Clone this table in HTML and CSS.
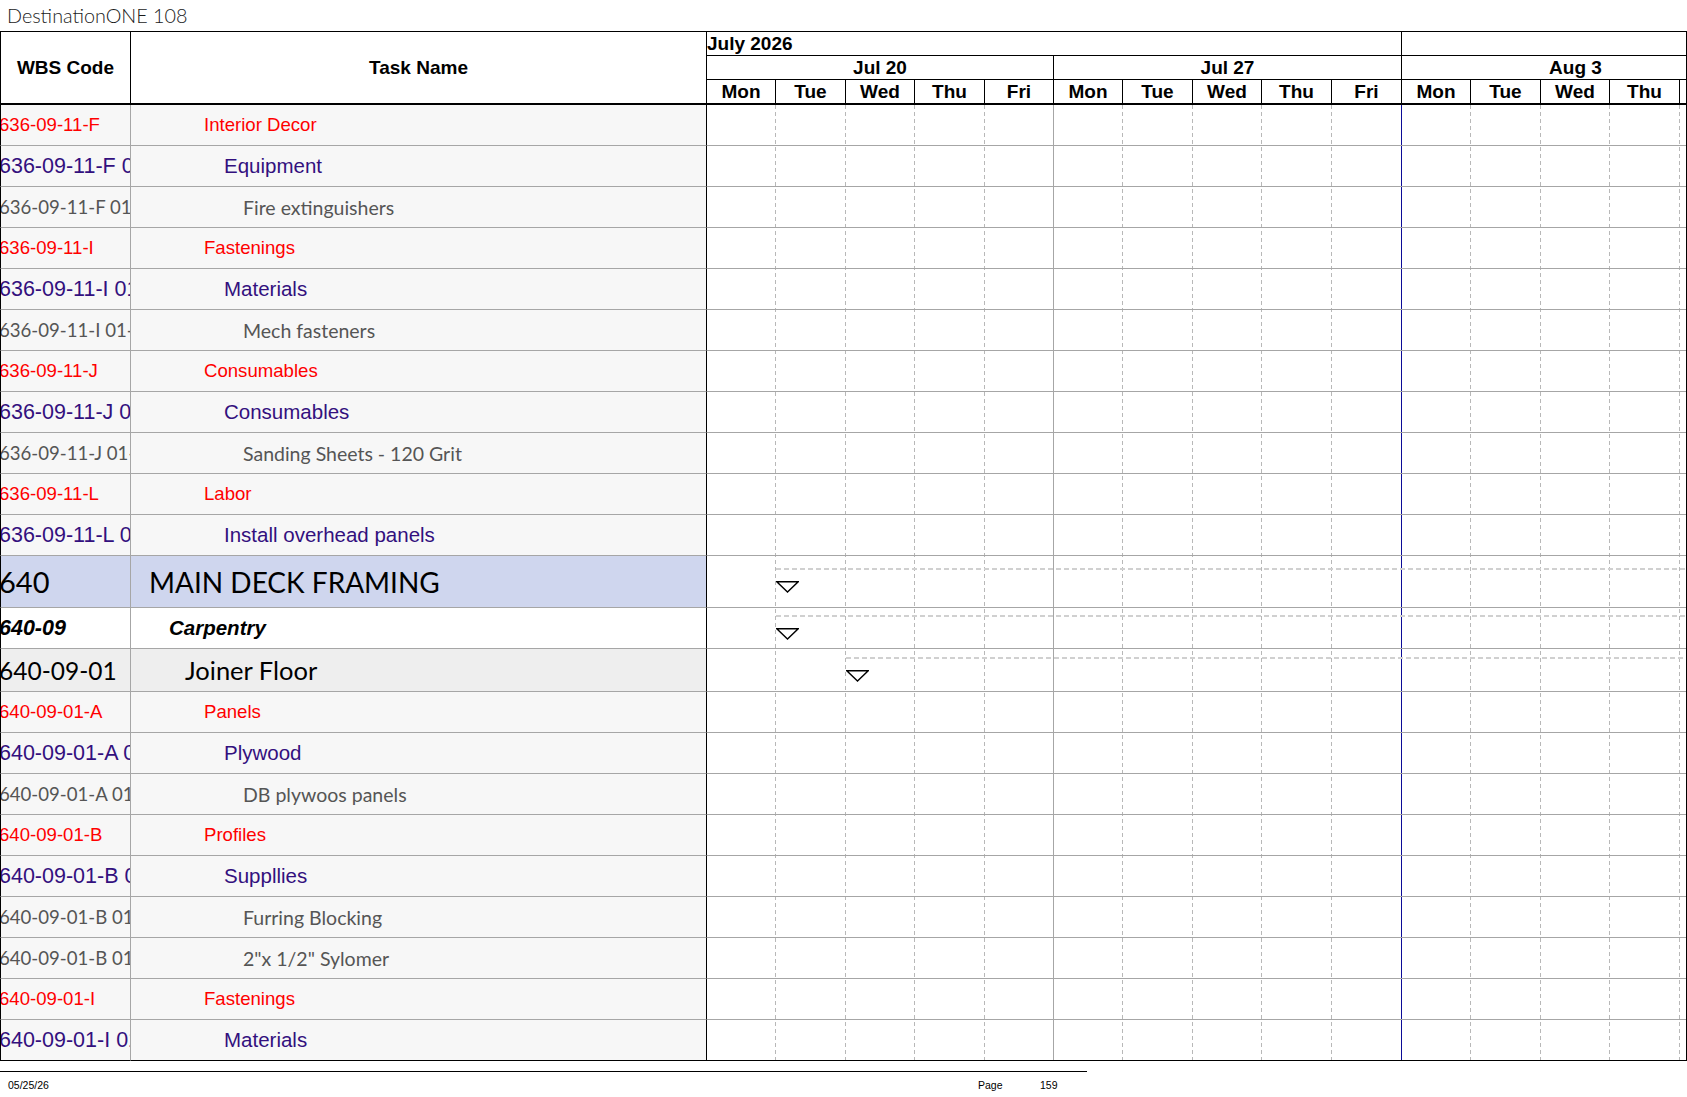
FILE: index.html
```html
<!DOCTYPE html>
<html>
<head>
<meta charset="utf-8">
<title>DestinationONE 108</title>
<link rel="stylesheet" href="styles.css">
</head>
<body>
<div class="title">DestinationONE 108</div>

<div class="head">
  <div class="hc wbs">WBS Code</div>
  <div class="hc task">Task Name</div>
  <div class="h-chart">
    <div class="month">July 2026</div>
    <div class="month-rest"></div>
    <div class="week w1">Jul 20</div>
    <div class="week w2">Jul 27</div>
    <div class="week w3"><span>Aug 3</span></div>
    <div class="day">Mon</div>
    <div class="day">Tue</div>
    <div class="day">Wed</div>
    <div class="day">Thu</div>
    <div class="day">Fri</div>
    <div class="day">Mon</div>
    <div class="day">Tue</div>
    <div class="day">Wed</div>
    <div class="day">Thu</div>
    <div class="day">Fri</div>
    <div class="day">Mon</div>
    <div class="day">Tue</div>
    <div class="day">Wed</div>
    <div class="day">Thu</div>
    <div class="day blank"></div>
  </div>
</div>

<div class="body">
  <div class="left">
    <div class="row red"><div class="w"><span>636-09-11-F</span></div><div class="t">Interior Decor</div></div>
    <div class="row pur"><div class="w"><span>636-09-11-F 01</span></div><div class="t">Equipment</div></div>
    <div class="row gry"><div class="w"><span>636-09-11-F 01-01</span></div><div class="t">Fire extinguishers</div></div>
    <div class="row red"><div class="w"><span>636-09-11-I</span></div><div class="t">Fastenings</div></div>
    <div class="row pur"><div class="w"><span>636-09-11-I 01</span></div><div class="t">Materials</div></div>
    <div class="row gry"><div class="w"><span>636-09-11-I 01-01</span></div><div class="t">Mech fasteners</div></div>
    <div class="row red"><div class="w"><span>636-09-11-J</span></div><div class="t">Consumables</div></div>
    <div class="row pur"><div class="w"><span>636-09-11-J 01</span></div><div class="t">Consumables</div></div>
    <div class="row gry"><div class="w"><span>636-09-11-J 01-01</span></div><div class="t">Sanding Sheets - 120 Grit</div></div>
    <div class="row red"><div class="w"><span>636-09-11-L</span></div><div class="t">Labor</div></div>
    <div class="row pur"><div class="w"><span>636-09-11-L 01</span></div><div class="t">Install overhead panels</div></div>
    <div class="row main"><div class="w"><span>640</span></div><div class="t">MAIN DECK FRAMING</div></div>
    <div class="row carp"><div class="w"><span>640-09</span></div><div class="t">Carpentry</div></div>
    <div class="row joiner"><div class="w"><span>640-09-01</span></div><div class="t">Joiner Floor</div></div>
    <div class="row red"><div class="w"><span>640-09-01-A</span></div><div class="t">Panels</div></div>
    <div class="row pur"><div class="w"><span>640-09-01-A 01</span></div><div class="t">Plywood</div></div>
    <div class="row gry"><div class="w"><span>640-09-01-A 01-01</span></div><div class="t">DB plywoos panels</div></div>
    <div class="row red"><div class="w"><span>640-09-01-B</span></div><div class="t">Profiles</div></div>
    <div class="row pur"><div class="w"><span>640-09-01-B 01</span></div><div class="t">Suppllies</div></div>
    <div class="row gry"><div class="w"><span>640-09-01-B 01-01</span></div><div class="t">Furring Blocking</div></div>
    <div class="row gry"><div class="w"><span>640-09-01-B 01-02</span></div><div class="t">2"x 1/2" Sylomer</div></div>
    <div class="row red"><div class="w"><span>640-09-01-I</span></div><div class="t">Fastenings</div></div>
    <div class="row pur"><div class="w"><span>640-09-01-I 01</span></div><div class="t">Materials</div></div>
  </div>

  <div class="chart">
    <div class="lines">
      <i></i><i></i><i></i><i></i><i class="wk"></i>
      <i></i><i></i><i></i><i></i><i class="now"></i>
      <i></i><i></i><i></i><i></i><i class="end"></i>
    </div>
    <div class="crows">
      <div class="cr"></div>
      <div class="cr"></div>
      <div class="cr"></div>
      <div class="cr"></div>
      <div class="cr"></div>
      <div class="cr"></div>
      <div class="cr"></div>
      <div class="cr"></div>
      <div class="cr"></div>
      <div class="cr"></div>
      <div class="cr"></div>
      <div class="cr main">
        <div class="bar start-tue">
          <div class="dash"></div>
          <svg class="tri" viewBox="0 0 23 12" width="23" height="12"><polygon points="0.8,0.8 22.2,0.8 11.5,11" fill="#fff" stroke="#000" stroke-width="1.4"/></svg>
        </div>
      </div>
      <div class="cr carp">
        <div class="bar start-tue">
          <div class="dash"></div>
          <svg class="tri" viewBox="0 0 23 12" width="23" height="12"><polygon points="0.8,0.8 22.2,0.8 11.5,11" fill="#fff" stroke="#000" stroke-width="1.4"/></svg>
        </div>
      </div>
      <div class="cr joiner">
        <div class="bar start-wed">
          <div class="dash"></div>
          <svg class="tri" viewBox="0 0 23 12" width="23" height="12"><polygon points="0.8,0.8 22.2,0.8 11.5,11" fill="#fff" stroke="#000" stroke-width="1.4"/></svg>
        </div>
      </div>
      <div class="cr"></div>
      <div class="cr"></div>
      <div class="cr"></div>
      <div class="cr"></div>
      <div class="cr"></div>
      <div class="cr"></div>
      <div class="cr"></div>
      <div class="cr"></div>
      <div class="cr"></div>
    </div>
  </div>
</div>

<div class="foot">
  <span>05/25/26</span>
  <span>Page</span>
  <span>159</span>
</div>
</body>
</html>
```

FILE: styles.css
```css
:root {
  --cols: 69px 70px 69px 70px 69px 69px 70px 69px 70px 70px 69px 70px 69px 70px 1fr;
  --rowline: #a6a6a6;
}

* { box-sizing: border-box; }

body {
  margin: 0;
  width: 1687px;
  background: #fff;
  font-family: "Liberation Sans", Arial, sans-serif;
  color: #000;
}

.title {
  height: 31px;
  line-height: 31px;
  padding-left: 7px;
  font-family: Lato, "Liberation Sans", sans-serif;
  font-weight: 300;
  font-size: 19.8px;
  color: #1a1a1a;
}

/* ---------- header ---------- */
.head {
  display: grid;
  grid-template-columns: 131px 576px 980px;
  height: 74px;
  border-top: 1px solid #000;
}

.hc {
  display: flex;
  align-items: center;
  justify-content: center;
  border-right: 1px solid #000;
  border-bottom: 2px solid #000;
  font-weight: bold;
  font-size: 19px;
}

.hc.wbs { border-left: 1px solid #000; }

.h-chart {
  display: grid;
  grid-template-columns: var(--cols);
  grid-template-rows: 24px 24px 25px;
  border-right: 1px solid #000;
  font-weight: bold;
  font-size: 19px;
  line-height: 23px;
}

.month {
  grid-column: 1 / 11;
  border-right: 1px solid #000;
  border-bottom: 1px solid #000;
  white-space: nowrap;
}

.month-rest {
  grid-column: 11 / 16;
  border-bottom: 1px solid #000;
}

.week {
  border-bottom: 1px solid #000;
  border-right: 1px solid #000;
  text-align: center;
  white-space: nowrap;
}

.w1 { grid-column: 1 / 6; }
.w2 { grid-column: 6 / 11; }
.w3 {
  grid-column: 11 / 16;
  border-right: none;
  overflow: hidden;
}
.w3 span {
  display: block;
  width: 347px;
  text-align: center;
}

.day {
  border-right: 1px solid #000;
  border-bottom: 2px solid #000;
  text-align: center;
  overflow: hidden;
}

.day.blank { border-right: none; }

/* ---------- body ---------- */
.body {
  display: grid;
  grid-template-columns: 707px 980px;
}

.row {
  display: grid;
  grid-template-columns: 131px 576px;
  height: 41px;
}

.row > div {
  display: flex;
  align-items: center;
  white-space: nowrap;
  overflow: hidden;
  background: #f7f7f7;
  border-bottom: 1px solid var(--rowline);
}

.row .w {
  border-left: 1px solid #000;
  border-right: 1px solid var(--rowline);
}

.row .w span { margin-left: -2px; }

.row .t { border-right: 1px solid #000; }

.row:last-child > div { border-bottom-color: #000; }

.row.red { color: #f00; font-size: 18.6px; }
.row.red .t { padding-left: 73px; }

.row.pur { color: #33107e; font-size: 20.5px; }
.row.pur .w { font-size: 21.5px; }
.row.pur .t { padding-left: 93px; }

.row.gry {
  color: #555;
  font-family: Lato, "Liberation Sans", sans-serif;
  font-size: 19.5px;
}
.row.gry .w { font-size: 18.6px; }
.row.gry .t { padding-left: 112px; }

.row.main {
  height: 52px;
  font-family: Lato, "Liberation Sans", sans-serif;
  font-size: 28px;
}
.row.main .w { font-size: 29px; }
.row.main > div { background: #cfd6ee; }
.row.main .t { padding-left: 18px; }

.row.carp {
  font-weight: bold;
  font-style: italic;
  font-size: 20.5px;
}
.row.carp .w { font-size: 21.5px; }
.row.carp > div { background: #fff; }
.row.carp .t { padding-left: 38px; }

.row.joiner {
  height: 43px;
  font-family: Lato, "Liberation Sans", sans-serif;
  font-size: 25.5px;
}
.row.joiner .w { font-size: 24.5px; }
.row.joiner > div { background: #eee; }
.row.joiner .t { padding-left: 54px; }

/* ---------- chart ---------- */
.chart {
  display: grid;
  border-right: 1px solid #000;
}

.chart > .lines,
.chart > .crows { grid-area: 1 / 1; }

.lines {
  display: grid;
  grid-template-columns: var(--cols);
}

.lines > i {
  background-image: repeating-linear-gradient(#b8b8b8 0 4px, transparent 4px 7px);
  background-size: 1px 100%;
  background-position: right top;
  background-repeat: no-repeat;
}

.lines > i.wk {
  background-image: none;
  border-right: 1px solid #a6a6a6;
}
.lines > i.now {
  background-image: none;
  border-right: 1px solid #0c0c96;
}
.lines > i.end { background-image: none; }

.cr {
  height: 41px;
  border-bottom: 1px solid var(--rowline);
}

.cr:last-child { border-bottom-color: #000; }

.cr.main { height: 52px; }
.cr.joiner { height: 43px; }

.bar { padding-top: 7px; }
.cr.main .bar { padding-top: 12px; }
.cr.joiner .bar { padding-top: 8px; }

.start-tue { margin-left: 69px; }
.start-wed { margin-left: 139px; }

.dash {
  height: 2px;
  background: repeating-linear-gradient(to right, #d0d0d0 0 5px, transparent 5px 8px);
}

.tri {
  display: block;
  margin-top: 11px;
}

/* ---------- footer ---------- */
.foot {
  width: 1087px;
  margin-top: 10px;
  border-top: 1px solid #000;
  display: grid;
  grid-template-columns: 970px 62px auto;
  padding-left: 8px;
  padding-top: 7px;
  font-size: 10.5px;
  line-height: 12px;
}
```
